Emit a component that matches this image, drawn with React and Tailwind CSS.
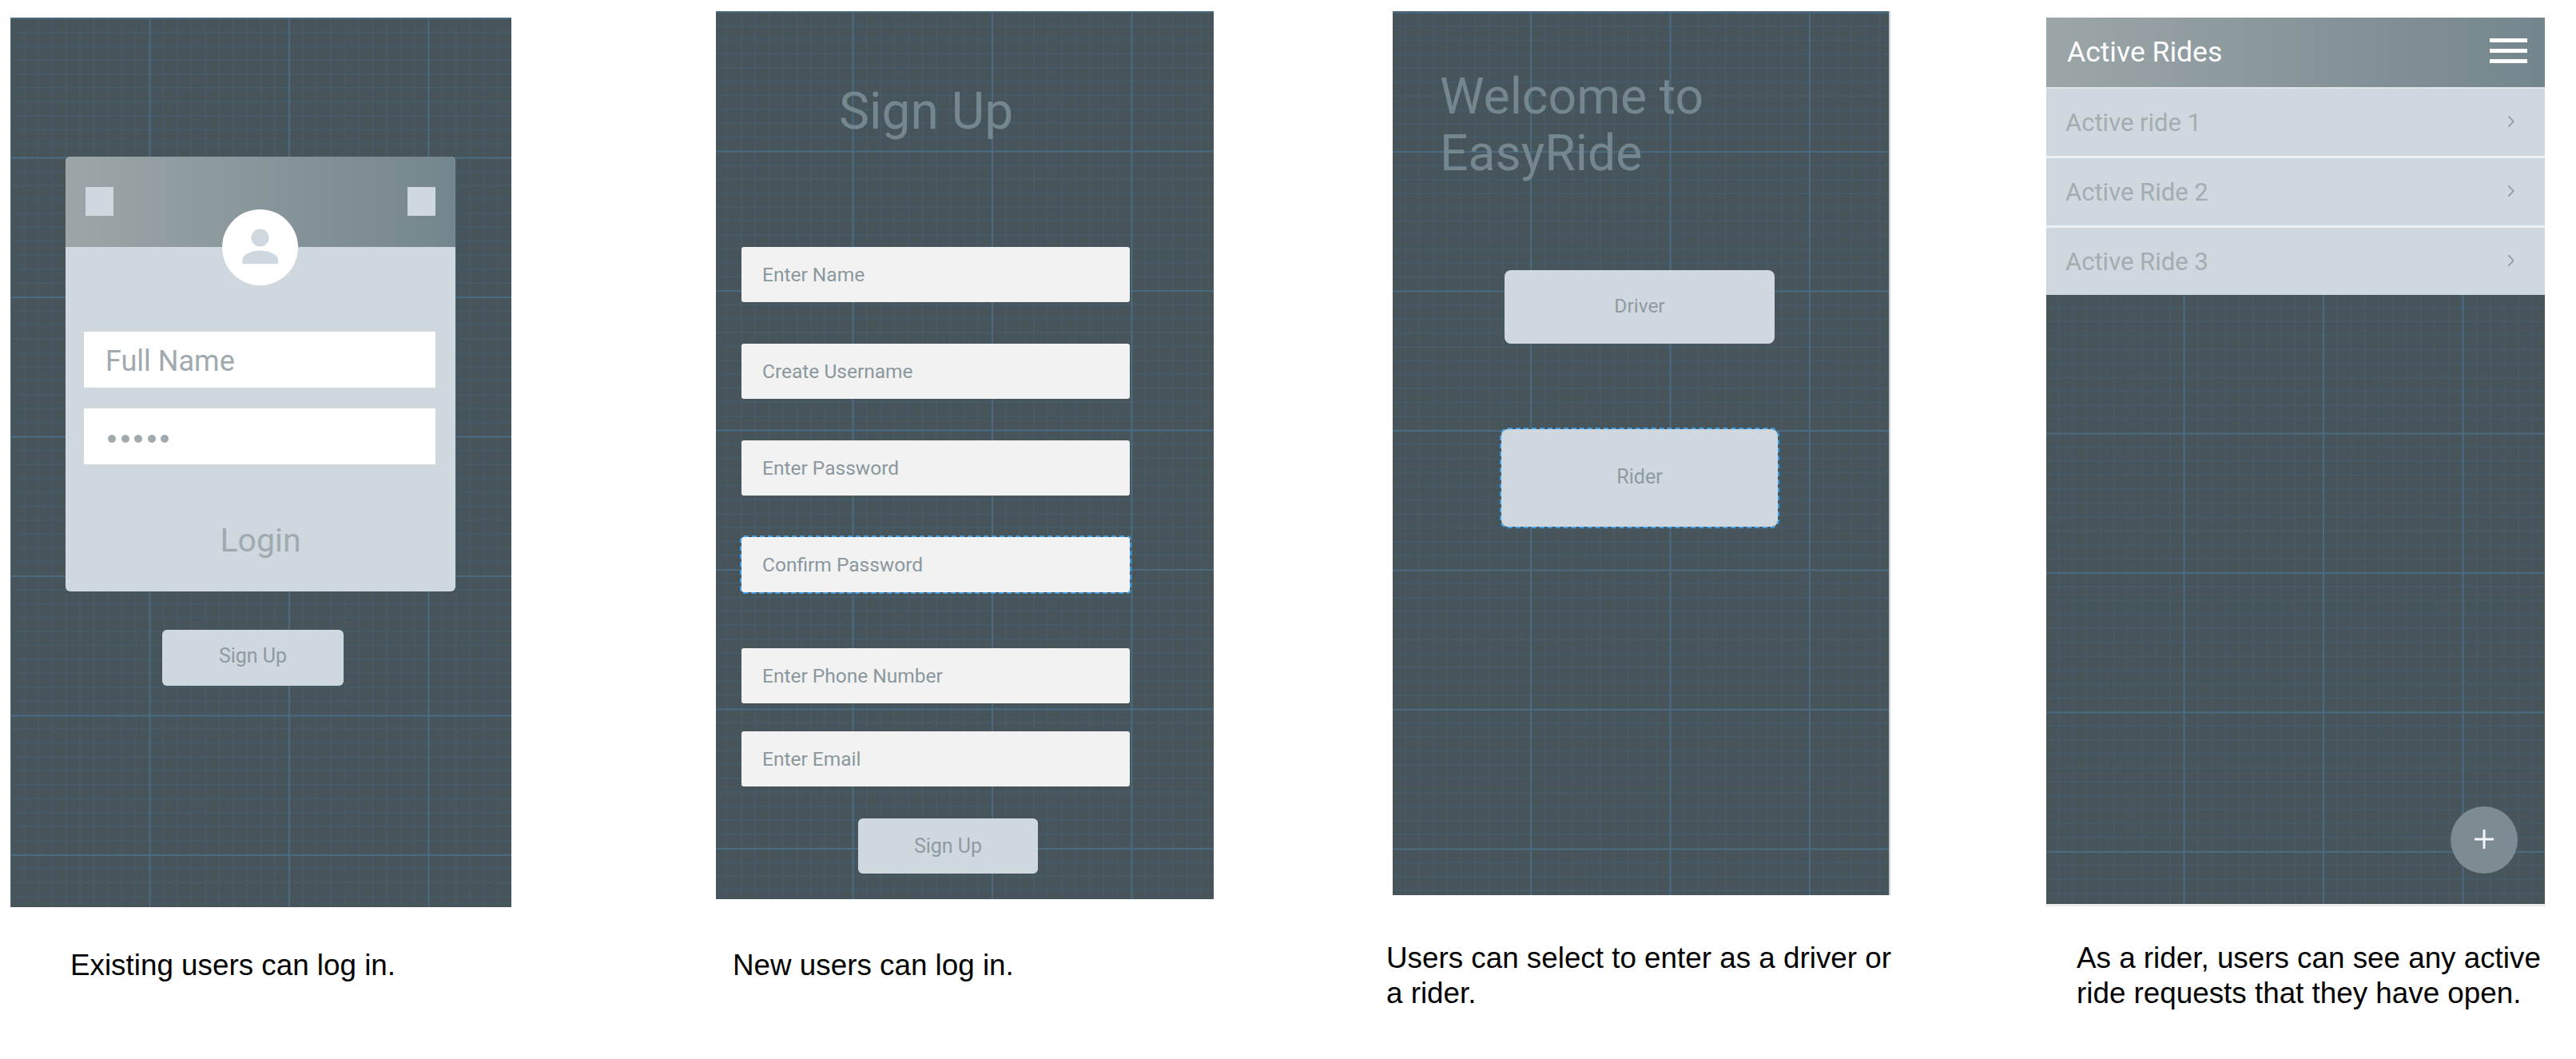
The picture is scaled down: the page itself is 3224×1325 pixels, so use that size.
const grid =
  'bg-[#47545a] bg-[linear-gradient(to_right,#4a6a80_2px,transparent_2px),linear-gradient(to_bottom,#4a6a80_2px,transparent_2px),linear-gradient(to_right,#465b68_1px,transparent_2.500px),linear-gradient(to_bottom,#465b68_1px,transparent_2.500px)] bg-[size:174.5px_174.5px,174.5px_174.5px,17.45px_17.45px,17.45px_17.45px]'

function Caption({ className, children }) {
  return (
    <p className={`whitespace-nowrap font-['Liberation_Sans',sans-serif] text-[36.800px] leading-[44px] text-black ${className}`}>
      {children}
    </p>
  )
}

function LoginScreen() {
  return (
    <div className="ml-[13px] mt-[22px] w-[627px]">
      <div className={`${grid} flex h-[1113px] flex-col bg-[position:-1px_0px] pt-[174px]`}>
        <div className="relative ml-[69px] h-[544px] w-[488px] overflow-hidden rounded-[6px] bg-[#cfd8de]">
          <div className="flex h-[113px] justify-between bg-gradient-to-r from-[#9ca6a8] to-[#74868d] px-[25px] pt-[38px]">
            <div className="h-[36px] w-[35px] bg-[#cfd8de]" />
            <div className="h-[36px] w-[35px] bg-[#cfd8de]" />
          </div>
          <div className="absolute left-[196px] top-[66px] h-[95px] w-[95px] rounded-full bg-white">
            <svg viewBox="0 0 95 95" className="h-full w-full" fill="#cfd8de">
              <circle cx="47.5" cy="35.5" r="11" />
              <path d="M25.5 68v-5c0-7 12-11.500 22-11.500s22.500 4.500 22.500 11.500v5z" />
            </svg>
          </div>
          <div className="ml-[23px] mt-[106px] flex h-[70px] w-[440px] items-center bg-white pl-[27px] pt-[3px] text-[36px] text-[#a0aaae]">
            Full Name
          </div>
          <div className="ml-[23px] mt-[26px] flex h-[70px] w-[440px] items-center gap-[6.500px] bg-white pl-[30px] pt-[6px]">
            {[0, 1, 2, 3, 4].map((dot) => (
              <span key={dot} className="h-[10px] w-[10px] rounded-full bg-[#a0aaae]" />
            ))}
          </div>
          <div className="mt-[70px] text-center text-[41px] leading-[50px] text-[#a0aaae]">Login</div>
        </div>
        <div className="ml-[190px] mt-[48px] flex h-[70px] w-[227px] items-center justify-center rounded-[6px] bg-[#cfd8de] pb-[5px] text-[25px] text-[#8e9ba1]">
          Sign Up
        </div>
      </div>
      <Caption className="ml-[75px] mt-[51px]">Existing users can log in.</Caption>
    </div>
  )
}

function Field({ className = '', children }) {
  return (
    <div className={`ml-[32px] flex h-[69px] w-[486px] items-center rounded-[3px] bg-[#f2f2f2] pl-[26px] pt-[1px] text-[24.500px] text-[#8a989e] ${className}`}>
      {children}
    </div>
  )
}

function SignUpScreen() {
  return (
    <div className="ml-[256px] mt-[14px] w-[623px]">
      <div className={`${grid} h-[1111px] bg-[position:-4px_0px] pt-[90px]`}>
        <h1 className="ml-[154px] text-[64px] font-normal leading-[72px] text-[#74878f]">Sign Up</h1>
        <Field className="mt-[133px]">Enter Name</Field>
        <Field className="mt-[52px]">Create Username</Field>
        <Field className="mt-[52px]">Enter Password</Field>
        <Field className="mt-[52px] outline-2 outline-[#3fa0e8] outline-dashed">Confirm Password</Field>
        <Field className="mt-[70px]">Enter Phone Number</Field>
        <Field className="mt-[35px]">Enter Email</Field>
        <div className="ml-[178px] mt-[40px] flex h-[69px] w-[225px] items-center justify-center rounded-[6px] bg-[#cfd8de] text-[25px] text-[#8e9ba1]">
          Sign Up
        </div>
      </div>
      <Caption className="ml-[21px] mt-[61px]">New users can log in.</Caption>
    </div>
  )
}

function RoleScreen() {
  return (
    <div className="ml-[224px] mt-[14px] w-[623px]">
      <div className={`${grid} h-[1106px] border-r-2 border-[#c9d2d8] bg-[position:-2.500px_0.500px] pt-[71px]`}>
        <h1 className="ml-[59px] text-[62.500px] font-normal leading-[71px] text-[#74878f]">
          Welcome to
          <br />
          EasyRide
        </h1>
        <div className="ml-[140px] mt-[111px] flex h-[92px] w-[338px] items-center justify-center rounded-[8px] bg-[#cfd8de] pb-[2px] text-[24.500px] text-[#8e9ba1]">
          Driver
        </div>
        <div className="ml-[136px] mt-[107px] flex h-[122px] w-[346px] items-center justify-center rounded-[8px] bg-[#cfd8de] pb-[3px] text-[25px] text-[#8e9ba1] outline-2 outline-[#3fa0e8] outline-dashed">
          Rider
        </div>
      </div>
      <Caption className="-ml-[8px] mt-[57px]">
        Users can select to enter as a driver or
        <br />
        a rider.
      </Caption>
    </div>
  )
}

function RideRow({ label }) {
  return (
    <div className="flex h-[84px] items-center justify-between bg-[#cfd8de] pl-[24px] pr-[37px] text-[31px] text-[#a3adb1]">
      <span className="pt-[2px]">{label}</span>
      <svg viewBox="0 0 10 18" className="mb-[2px] mr-[1px] h-[16px] w-[9px]" fill="none" stroke="#8e9ba1" strokeWidth="2">
        <path d="M1.500 1.500L8.500 9L1.500 16.500" />
      </svg>
    </div>
  )
}

function RidesScreen() {
  return (
    <div className="ml-[195px] mt-[22px] w-[624px]">
      <div className={`${grid} relative h-[1112px] border-b-[3px] border-[#ececec] bg-[position:-3px_-4px]`}>
        <div className="flex h-[87px] items-center justify-between bg-gradient-to-r from-[#9ca6a8] to-[#74868d] pl-[26px] pr-[22px] text-[35.500px] text-white">
          <span>Active Rides</span>
          <div className="flex w-[47px] flex-col gap-[8px] pb-[4px]">
            <div className="h-[5px] bg-white" />
            <div className="h-[5px] bg-white" />
            <div className="h-[5px] bg-white" />
          </div>
        </div>
        <div className="h-[2px] bg-[#dfe4e7]" />
        <RideRow label="Active ride 1" />
        <div className="h-[3px] bg-[#eef1f3]" />
        <RideRow label="Active Ride 2" />
        <div className="h-[3px] bg-[#eef1f3]" />
        <RideRow label="Active Ride 3" />
        <div className="absolute left-[506px] top-[987px] flex h-[84px] w-[84px] items-center justify-center rounded-full bg-[#7d8c93]">
          <svg viewBox="0 0 24 24" className="mb-[2px] h-[24px] w-[24px]" stroke="#f4f6f7" strokeWidth="3">
            <path d="M12 0V24M0 12H24" />
          </svg>
        </div>
      </div>
      <Caption className="ml-[38px] mt-[43px]">
        As a rider, users can see any active
        <br />
        ride requests that they have open.
      </Caption>
    </div>
  )
}

export default function App() {
  return (
    <div className="flex h-[1325px] w-[3224px] items-start overflow-hidden bg-white font-['Roboto',sans-serif]">
      <LoginScreen />
      <SignUpScreen />
      <RoleScreen />
      <RidesScreen />
    </div>
  )
}
